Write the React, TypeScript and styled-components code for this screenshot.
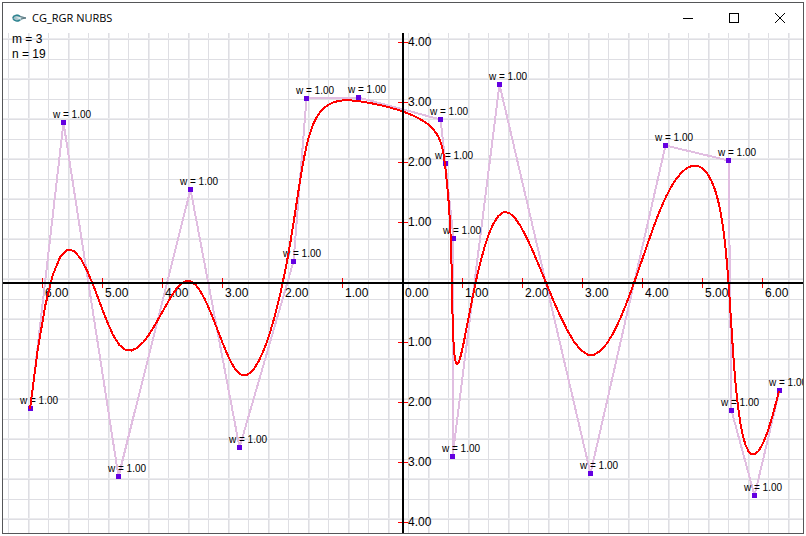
import React from "react";
import styled, { createGlobalStyle } from "styled-components";

const PageStyle = createGlobalStyle`
  html, body { height: 100%; margin: 0; background: #fff; }
  #root { height: 100%; }
`;

const Desktop = styled.div`
  box-sizing: border-box;
  height: 100%;
  padding: 2px;
  display: flex;
  background: #fff;
`;

const AppWindow = styled.main`
  flex: 1;
  min-width: 0;
  display: flex;
  flex-direction: column;
  border: 1px solid #555658;
  background: #fff;
`;

const TitleBar = styled.header`
  flex: none;
  display: flex;
  align-items: center;
  height: 30px;
  padding-left: 8px;
`;

const Title = styled.h1`
  flex: 1;
  margin: 0 0 0 5px;
  font: 400 11px/16px "Open Sans", "Noto Sans", sans-serif;
  color: #000;
`;

const CaptionButton = styled.button`
  display: flex;
  align-items: center;
  justify-content: center;
  width: 46px;
  height: 30px;
  padding: 0;
  border: 0;
  background: transparent;
  color: #000;
`;

const PlotArea = styled.section`
  flex: 1;
  min-height: 0;
  overflow: hidden;
`;

const Plot = styled.svg`
  display: block;
  width: 100%;
  height: 100%;
`;

const PlotText = styled.text<{ $size: number }>`
  font-family: "Liberation Sans", Arial, sans-serif;
  font-size: ${(p) => p.$size}px;
  fill: #000;
`;

type Point = [number, number];

const DEGREE = 3;
const WIDTH = 800;
const HEIGHT = 500;
const ORIGIN: Point = [400, 250];
const UNIT = 60;

const controlPoints: Point[] = [
  [27, 375], [60, 89], [115, 443], [187, 156], [236, 414], [290, 228],
  [303, 65], [355, 64], [437, 86], [442, 130], [450, 205], [449, 423],
  [496, 51], [587, 440], [662, 112], [725, 127], [728, 377], [751, 462],
  [776, 357],
];

const spans = controlPoints.length - DEGREE;
const knots = Array.from({ length: controlPoints.length + DEGREE + 1 }, (_, i) =>
  Math.max(0, Math.min(spans, i - DEGREE)),
);

// De Boor evaluation on a clamped uniform knot vector; all weights are 1.
function evaluate(u: number): Point {
  const k = Math.min(Math.floor(u), spans - 1) + DEGREE;
  const d = controlPoints.slice(k - DEGREE, k + 1).map((p) => [...p] as Point);
  for (let r = 1; r <= DEGREE; r++) {
    for (let j = DEGREE; j >= r; j--) {
      const i = j + k - DEGREE;
      const a = (u - knots[i]) / (knots[i + DEGREE - r + 1] - knots[i]);
      d[j] = [
        (1 - a) * d[j - 1][0] + a * d[j][0],
        (1 - a) * d[j - 1][1] + a * d[j][1],
      ];
    }
  }
  return d[DEGREE];
}

const toPoints = (list: Point[]) =>
  list.map(([x, y]) => `${x.toFixed(2)},${y.toFixed(2)}`).join(" ");

const STEPS = 200;
const curve = Array.from({ length: STEPS + 1 }, (_, i) => evaluate((i / STEPS) * spans));

const xUnits = [-6, -5, -4, -3, -2, -1, 0, 1, 2, 3, 4, 5, 6];
const yUnits = [-4, -3, -2, -1, 1, 2, 3, 4];

function Grid() {
  const columns = Array.from({ length: 40 }, (_, i) => 5 + i * 20);
  const rows = Array.from({ length: 25 }, (_, i) => 6 + i * 20);
  return (
    <g fill="#dedee3" shapeRendering="crispEdges">
      {columns.map((x, i) => (
        <React.Fragment key={x}>
          <rect x={x} y={0} width={1} height={HEIGHT} />
          {i % 2 === 1 && <rect x={x + 1} y={0} width={1} height={HEIGHT} fill="#ebebee" />}
        </React.Fragment>
      ))}
      {rows.map((y, i) => (
        <React.Fragment key={y}>
          <rect x={0} y={y} width={WIDTH} height={1} />
          {i % 2 === 0 && <rect x={0} y={y - 1} width={WIDTH} height={1} fill="#ebebee" />}
        </React.Fragment>
      ))}
    </g>
  );
}

function Ticks() {
  const [ox, oy] = ORIGIN;
  return (
    <g fill="#f00" shapeRendering="crispEdges">
      {xUnits.filter((n) => n !== 0).map((n) => (
        <rect key={n} x={ox + n * UNIT - 1} y={oy - 5} width={1} height={10} />
      ))}
      {yUnits.map((n) => (
        <rect key={n} x={ox - 5} y={oy - n * UNIT - 1} width={10} height={1} />
      ))}
    </g>
  );
}

function Axes() {
  const [ox, oy] = ORIGIN;
  return (
    <g shapeRendering="crispEdges">
      <rect x={0} y={oy - 1} width={WIDTH} height={2} />
      <rect x={ox - 1} y={0} width={2} height={HEIGHT} />
    </g>
  );
}

function AxisLabels() {
  const [ox, oy] = ORIGIN;
  return (
    <g>
      {xUnits.map((n) => (
        <PlotText $size={12} key={n} x={ox + n * UNIT + 2} y={oy + 14}>
          {Math.abs(n).toFixed(2)}
        </PlotText>
      ))}
      {yUnits.map((n) => (
        <PlotText $size={12} key={n} x={ox + 5} y={oy - n * UNIT + 3}>
          {Math.abs(n).toFixed(2)}
        </PlotText>
      ))}
    </g>
  );
}

function AppIcon() {
  return (
    <svg width="16" height="16" viewBox="0 0 16 16" aria-hidden="true">
      <path d="M1 7.500C2 4 7 3.500 10 6l5 1.500v1L11 9.500C8 13 1.500 12 1 7.500z" fill="#a9c4cb" />
      <path d="M2 8c.5-3 5-3.500 7-1.500M2 8.500c1 2.500 5 3.500 7 1.200" fill="none" stroke="#2d8490" strokeWidth="1.400" />
      <path d="M5 7.500l4-.5 1.500 1-2 1.200z" fill="#dcebed" />
      <path d="M9 6.500l6 1.500-5 1" fill="none" stroke="#5f7b83" strokeWidth="1" />
    </svg>
  );
}

export default function App() {
  return (
    <>
      <PageStyle />
      <Desktop>
        <AppWindow>
          <TitleBar>
            <AppIcon />
            <Title>CG_RGR NURBS</Title>
            <CaptionButton type="button" aria-label="Minimize">
              <svg width="10" height="10" shapeRendering="crispEdges">
                <path d="M0 5.500h10" stroke="currentColor" />
              </svg>
            </CaptionButton>
            <CaptionButton type="button" aria-label="Maximize">
              <svg width="10" height="10" shapeRendering="crispEdges">
                <path d="M.5.5h9v9h-9z" fill="none" stroke="currentColor" />
              </svg>
            </CaptionButton>
            <CaptionButton type="button" aria-label="Close">
              <svg width="10" height="10">
                <path d="M0 0l10 10M10 0L0 10" stroke="currentColor" />
              </svg>
            </CaptionButton>
          </TitleBar>
          <PlotArea>
            <Plot viewBox={`0 0 ${WIDTH} ${HEIGHT}`} role="img" aria-label="NURBS curve with control polygon">
              <Grid />
              <Ticks />
              <polyline
                points={toPoints(controlPoints)}
                fill="none"
                stroke="#e1bee1"
                strokeWidth={2}
                shapeRendering="crispEdges"
                transform="translate(.5 .5)"
              />
              <AxisLabels />
              {controlPoints.map(([x, y]) => (
                <g key={`${x}-${y}`}>
                  <rect x={x - 2} y={y - 2} width={5} height={5} fill="#6400e1" shapeRendering="crispEdges" />
                  <PlotText $size={10} x={x - 10} y={y - 4}>w = 1.00</PlotText>
                </g>
              ))}
              <PlotText $size={12} x={9} y={10}>m = {DEGREE}</PlotText>
              <PlotText $size={12} x={9} y={25}>n = {controlPoints.length}</PlotText>
              <polyline
                points={toPoints(curve)}
                fill="none"
                stroke="#f00"
                strokeWidth={2}
                shapeRendering="crispEdges"
                transform="translate(0 1)"
              />
              <Axes />
            </Plot>
          </PlotArea>
        </AppWindow>
      </Desktop>
    </>
  );
}
